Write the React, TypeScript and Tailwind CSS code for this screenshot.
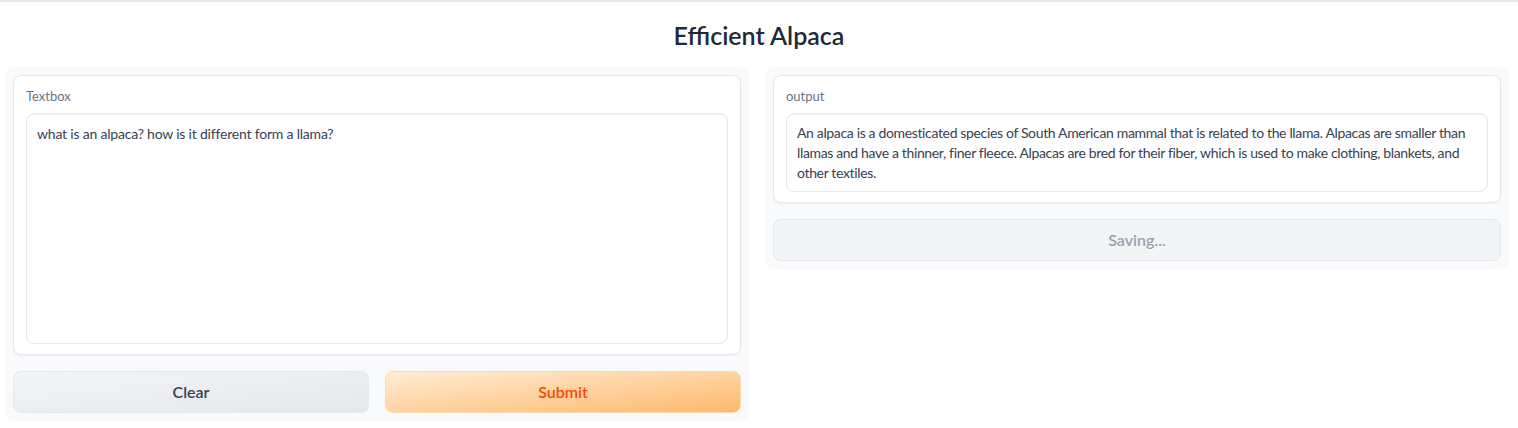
import React from "react";

const font = { fontFamily: '"Source Sans Pro", Lato, "Noto Sans", sans-serif' };

function Block({ children }: { children: React.ReactNode }) {
  return (
    <div className="rounded-lg border border-gray-200 bg-white px-[12px] pt-[11px] pb-[10px] shadow-[0_1px_2px_rgba(0,0,0,0.05)]">
      {children}
    </div>
  );
}

export default function App() {
  return (
    <div className="min-h-screen bg-white text-gray-700" style={font}>
      <div className="border-t-2 border-gray-200" />
      <h1 className="pt-[15px] pb-[14px] text-center text-[25px] font-semibold leading-[36px] text-gray-800">
        Efficient Alpaca
      </h1>
      <div className="flex gap-4 pl-[5px] pr-[9px]">
        <div className="flex flex-1 flex-col gap-4 self-start rounded-lg bg-gray-50 p-2">
          <Block>
            <div className="mb-[8px] text-[13px] leading-[18px] text-gray-500">Textbox</div>
            <div className="h-[231px] rounded-lg border border-gray-200 bg-white px-[10px] py-[10px] text-[14px] leading-[20px] tracking-[-0.2px] text-gray-700 shadow-[inset_0_1px_2px_rgba(0,0,0,0.05)]">
              what is an alpaca? how is it different form a llama?
            </div>
          </Block>
          <div className="flex gap-4">
            <button className="h-[42px] flex-1 rounded-lg border border-gray-200 bg-gradient-to-br from-gray-100 to-gray-200 text-[16px] font-semibold text-gray-700">
              Clear
            </button>
            <button className="h-[42px] flex-1 rounded-lg border border-orange-200 bg-gradient-to-br from-orange-100 to-orange-300 text-[16px] font-semibold text-orange-600">
              Submit
            </button>
          </div>
        </div>
        <div className="flex flex-1 flex-col gap-4 self-start rounded-lg bg-gray-50 p-2">
          <Block>
            <div className="mb-[8px] text-[13px] leading-[18px] text-gray-500">output</div>
            <div className="rounded-lg border border-gray-200 bg-white px-[10px] pt-[9px] pb-[8px] text-[14px] leading-[20px] tracking-[-0.35px] text-gray-700 shadow-[inset_0_1px_2px_rgba(0,0,0,0.05)]">
              An alpaca is a domesticated species of South American mammal that is related to the llama. Alpacas are smaller than llamas and have a thinner, finer fleece. Alpacas are bred for their fiber, which is used to make clothing, blankets, and other textiles.
            </div>
          </Block>
          <button className="h-[42px] rounded-lg border border-gray-200 bg-gray-100 text-[16px] font-semibold text-gray-400">
            Saving...
          </button>
        </div>
      </div>
    </div>
  );
}
